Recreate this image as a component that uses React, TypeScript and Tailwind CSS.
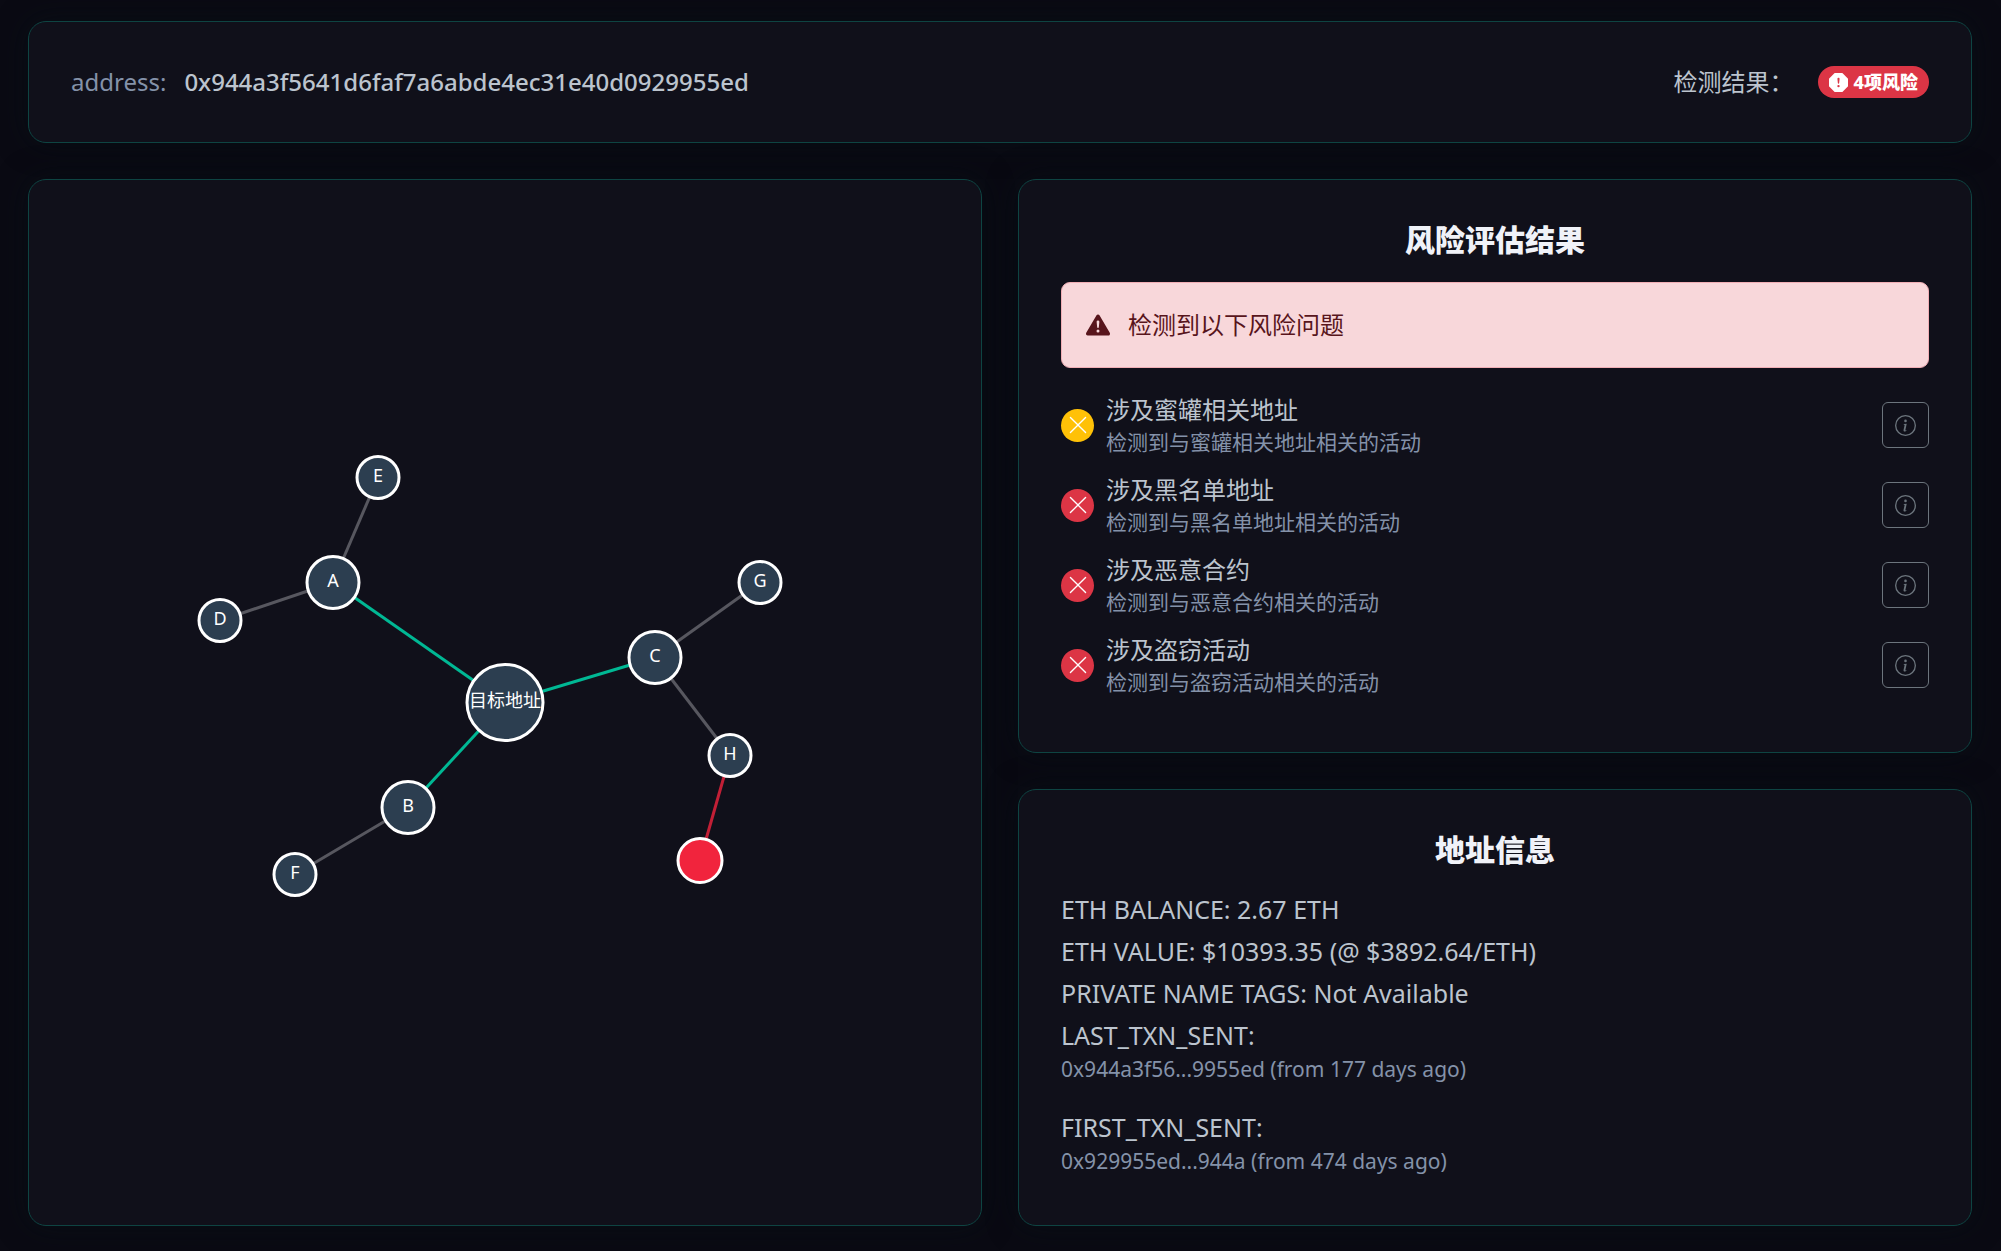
import {
  BsExclamationOctagonFill,
  BsExclamationTriangleFill,
  BsInfoCircle,
  BsXLg,
} from "react-icons/bs";
import type { ReactNode } from "react";

const cardClass =
  "rounded-[18px] border border-[#0e4442] bg-[#10101a] shadow-[0_0_30px_rgba(6,17,21,0.6)]";

type GraphNode = { id: string; x: number; y: number; r: number; danger?: boolean };

const nodes: GraphNode[] = [
  { id: "目标地址", x: 0, y: 0, r: 38 },
  { id: "A", x: -172, y: -120, r: 26 },
  { id: "B", x: -97, y: 105, r: 26 },
  { id: "C", x: 150, y: -45, r: 26 },
  { id: "D", x: -285, y: -82, r: 21 },
  { id: "E", x: -127, y: -225, r: 21 },
  { id: "F", x: -210, y: 172, r: 21 },
  { id: "G", x: 255, y: -120, r: 21 },
  { id: "H", x: 225, y: 53, r: 21 },
  { id: "", x: 195, y: 158, r: 22, danger: true },
];

const links: [number, number, string][] = [
  [0, 1, "#00b894"],
  [0, 2, "#00b894"],
  [0, 3, "#00b894"],
  [1, 4, "#57575f"],
  [1, 5, "#57575f"],
  [2, 6, "#57575f"],
  [3, 7, "#57575f"],
  [3, 8, "#57575f"],
  [8, 9, "#c21f36"],
];

const risks = [
  { title: "涉及蜜罐相关地址", desc: "检测到与蜜罐相关地址相关的活动", warning: true },
  { title: "涉及黑名单地址", desc: "检测到与黑名单地址相关的活动" },
  { title: "涉及恶意合约", desc: "检测到与恶意合约相关的活动" },
  { title: "涉及盗窃活动", desc: "检测到与盗窃活动相关的活动" },
];

function Heading({ children }: { children: ReactNode }) {
  return (
    <h2 className="text-center text-[30px] leading-9 font-extrabold text-[#f0f2f8]">{children}</h2>
  );
}

function Graph() {
  return (
    <svg
      viewBox="-476 -520 952 1040"
      className="h-full w-full"
      role="img"
      aria-label="目标地址关系图"
    >
      {links.map(([a, b, color]) => (
        <line
          key={`${a}-${b}`}
          x1={nodes[a].x}
          y1={nodes[a].y}
          x2={nodes[b].x}
          y2={nodes[b].y}
          stroke={color}
          strokeWidth="3"
        />
      ))}
      {nodes.map((n) => (
        <g key={n.id}>
          <circle
            cx={n.x}
            cy={n.y}
            r={n.r}
            fill={n.danger ? "#f1243d" : "#2c3e50"}
            stroke="#fff"
            strokeWidth="3"
          />
          <text x={n.x} y={n.y + 4} textAnchor="middle" fontSize="18" fill="#fff">
            {n.id}
          </text>
        </g>
      ))}
    </svg>
  );
}

export default function App() {
  return (
    <main className="flex min-h-screen flex-col gap-9 bg-[#0a0a13] pt-[21px] pr-[29px] pb-[25px] pl-7 font-['Noto_Sans','Noto_Sans_CJK_SC',sans-serif] text-2xl leading-9 text-[#bcc4ce]">
      <header className={`${cardClass} flex h-[122px] items-center justify-between px-[42px]`}>
        <p className="flex gap-[18px]">
          <span className="text-[#8492a9]">address:</span>
          <span className="font-medium">0x944a3f5641d6faf7a6abde4ec31e40d0929955ed</span>
        </p>
        <div className="flex items-center gap-6">
          <span>检测结果：</span>
          <span className="flex h-8 items-center gap-[6px] rounded-full bg-[#dc3545] px-[11px] text-lg font-extrabold text-white">
            <BsExclamationOctagonFill className="size-[19px]" />
            4项风险
          </span>
        </div>
      </header>

      <div className="grid flex-1 grid-cols-2 gap-9">
        <section className={`${cardClass} overflow-hidden`}>
          <Graph />
        </section>

        <div className="flex flex-col gap-9">
          <section className={`${cardClass} flex-1 px-[42px] pt-[42px] pb-9`}>
            <Heading>风险评估结果</Heading>
            <div
              role="alert"
              className="mt-6 flex h-[86px] items-center gap-[18px] rounded-[9px] border border-[#f1aeb5] bg-[#f8d7da] px-6 text-[#58151c]"
            >
              <BsExclamationTriangleFill className="size-6" />
              检测到以下风险问题
            </div>
            <ul className="mt-[25px] flex flex-col gap-4">
              {risks.map((risk) => (
                <li key={risk.title} className="flex h-16 items-center gap-3">
                  <span
                    className={`flex size-[33px] items-center justify-center rounded-full text-white ${
                      risk.warning ? "bg-[#ffc107]" : "bg-[#dc3545]"
                    }`}
                  >
                    <BsXLg className="size-[22px]" />
                  </span>
                  <div className="flex-1">
                    <p className="leading-[34px]">{risk.title}</p>
                    <p className="text-[21px] leading-[30px] text-[#8492a9]">{risk.desc}</p>
                  </div>
                  <button
                    type="button"
                    aria-label={`${risk.title}详情`}
                    className="flex h-[46px] w-[47px] items-center justify-center rounded-md border border-[#6c757d] text-[#6c757d]"
                  >
                    <BsInfoCircle className="size-[21px]" />
                  </button>
                </li>
              ))}
            </ul>
          </section>

          <section className={`${cardClass} h-[437px] px-[42px] pt-[42px]`}>
            <Heading>地址信息</Heading>
            <div className="mt-5 text-[25px] leading-[42px]">
              <p>ETH BALANCE: 2.67 ETH</p>
              <p>ETH VALUE: $10393.35 (@ $3892.64/ETH)</p>
              <p>PRIVATE NAME TAGS: Not Available</p>
              <p>LAST_TXN_SENT:</p>
              <p className="text-[21px] leading-[26px] text-[#8492a9]">
                0x944a3f56...9955ed (from 177 days ago)
              </p>
              <p className="mt-6">FIRST_TXN_SENT:</p>
              <p className="text-[21px] leading-[26px] text-[#8492a9]">
                0x929955ed...944a (from 474 days ago)
              </p>
            </div>
          </section>
        </div>
      </div>
    </main>
  );
}
